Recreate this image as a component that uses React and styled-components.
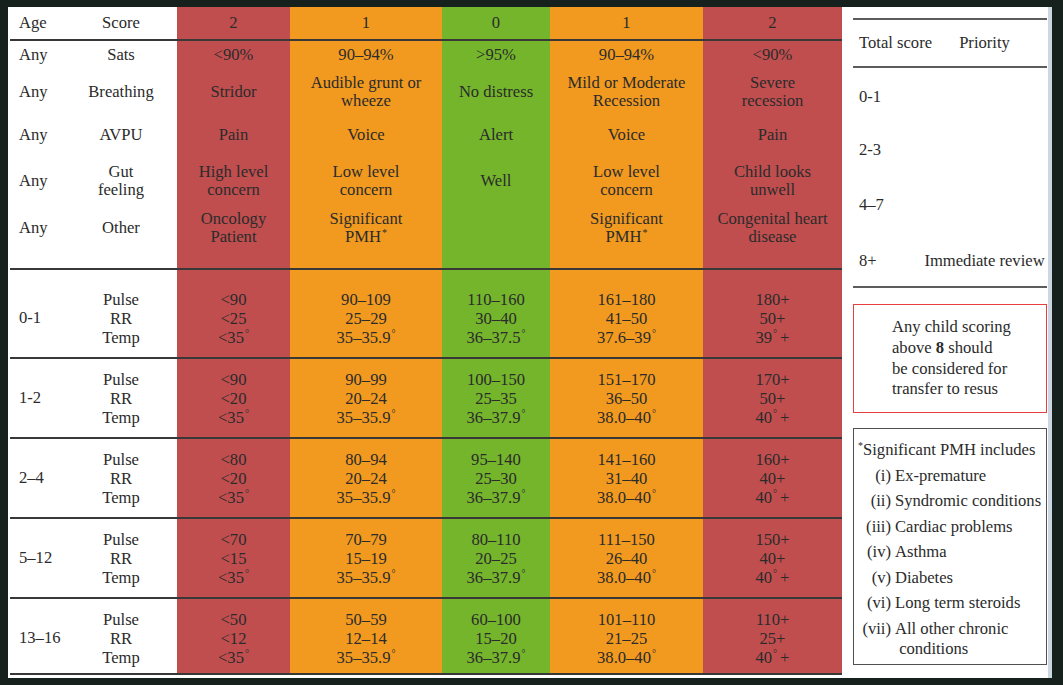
import React from 'react';
import styled, { createGlobalStyle } from 'styled-components';

const GlobalStyle = createGlobalStyle`
  html, body { margin: 0; padding: 0; background: #16201c; }
  body {
    font-family: "Liberation Serif", "Times New Roman", serif;
    color: #2b2b2b;
    font-size: 16.6px;
  }
`;

const COLS = '55px 112px 113px 152px 108px 153px 139px';
const TONES = {
  white: '#ffffff',
  red: '#c04e4f',
  orange: '#f29a1f',
  green: '#74b52b',
};
const ORDER = ['white', 'white', 'red', 'orange', 'green', 'orange', 'red'];

const Frame = styled.div`
  width: 1063px;
  height: 685px;
  box-sizing: border-box;
  padding: 7px 11px 7px 8px;
  background: #16201c;
`;

const Sheet = styled.div`
  height: 100%;
  box-sizing: border-box;
  background: #fff;
  border-right: 4px solid #cbd7e2;
  display: flex;
`;

const Table = styled.div`
  width: 834px;
  padding-left: 2px;
  box-sizing: border-box;
  display: flex;
  flex-direction: column;
`;

const Section = styled.div`
  border-bottom: 2px solid #383838;
`;

const Row = styled.div`
  display: grid;
  grid-template-columns: ${COLS};
  height: ${(p) => p.$h}px;
`;

const Cell = styled.div`
  background: ${(p) => TONES[p.$tone]};
  display: flex;
  align-items: center;
  justify-content: ${(p) => (p.$left ? 'flex-start' : 'center')};
  padding: ${(p) => p.$pt || 0}px 0 ${(p) => p.$pb || 0}px ${(p) => (p.$left ? 9 : 0)}px;
  box-sizing: border-box;
  text-align: center;
  line-height: ${(p) => p.$lh || 18}px;
  white-space: nowrap;
`;

const Stack = styled.div`
  display: flex;
  flex-direction: column;
  align-items: center;
`;

const Sup = styled.span`
  font-size: 10px;
  position: relative;
  top: -6px;
  margin-left: 1px;
  margin-right: ${(p) => (p.$gap ? '3px' : '0')};
  line-height: 0;
`;

const Side = styled.aside`
  width: 206px;
  box-sizing: border-box;
  padding: 11px 1px 0 11px;
  display: flex;
  flex-direction: column;
`;

const ScoreTable = styled.div`
  border-top: 2px solid #5c5c5c;
  border-bottom: 2px solid #5c5c5c;
`;

const ScoreRow = styled.div`
  display: grid;
  grid-template-columns: 69px 1fr;
  align-items: center;
  height: ${(p) => p.$h}px;
  border-bottom: ${(p) => (p.$rule ? '2px solid #5c5c5c' : 'none')};
`;

const ScoreText = styled.span`
  padding-left: ${(p) => (p.$center ? '0' : '6px')};
  text-align: ${(p) => (p.$center ? 'center' : 'left')};
  white-space: nowrap;
`;

const AlertBox = styled.div`
  margin-top: 16px;
  height: 109px;
  box-sizing: border-box;
  border: 1.5px solid #e5403f;
  display: flex;
  align-items: center;
  padding-left: 38px;
  line-height: 20.7px;
  b { font-weight: bold; }
`;

const NoteBox = styled.div`
  margin-top: 15px;
  height: 237px;
  box-sizing: border-box;
  border: 1.5px solid #505050;
  padding-top: 8px;
`;

const NoteTitle = styled.div`
  line-height: 26px;
  padding-left: 3px;
  white-space: nowrap;
`;

const NoteList = styled.div`
  display: grid;
  grid-template-columns: 37px 1fr;
  column-gap: 4px;
  line-height: 20px;
`;

const Numeral = styled.span`
  text-align: right;
  padding: 2.75px 0;
  white-space: nowrap;
`;

const NoteText = styled.span`
  padding: 2.75px 0;
  white-space: nowrap;
`;

const deg = (v, gap) => (
  <>
    {v}
    <Sup $gap={gap}>°</Sup>
  </>
);

const pmh = (
  <>
    Significant
    <br />
    PMH<Sup>*</Sup>
  </>
);

const header = ['Age', 'Score', '2', '1', '0', '1', '2'];

const anyRows = [
  { h: 28, label: 'Sats', vals: ['<90%', '90–94%', '>95%', '90–94%', '<90%'] },
  {
    h: 46,
    label: 'Breathing',
    vals: [
      'Stridor',
      <>Audible grunt or<br />wheeze</>,
      'No distress',
      <>Mild or Moderate<br />Recession</>,
      <>Severe<br />recession</>,
    ],
  },
  { h: 40, label: 'AVPU', vals: ['Pain', 'Voice', 'Alert', 'Voice', 'Pain'] },
  {
    h: 52,
    label: <>Gut<br />feeling</>,
    vals: [
      <>High level<br />concern</>,
      <>Low level<br />concern</>,
      'Well',
      <>Low level<br />concern</>,
      <>Child looks<br />unwell</>,
    ],
  },
  {
    h: 61,
    pb: 19,
    label: 'Other',
    vals: [
      <>Oncology<br />Patient</>,
      pmh,
      '',
      pmh,
      <>Congenital heart<br />disease</>,
    ],
  },
];

const vitals = [
  {
    age: '0-1', h: 87, pt: 9,
    vals: [
      ['<90', '<25', deg('<35')],
      ['90–109', '25–29', deg('35–35.9')],
      ['110–160', '30–40', deg('36–37.5')],
      ['161–180', '41–50', deg('37.6–39')],
      ['180+', '50+', <>{deg('39', true)}+</>],
    ],
  },
  {
    age: '1-2', h: 78,
    vals: [
      ['<90', '<20', deg('<35')],
      ['90–99', '20–24', deg('35–35.9')],
      ['100–150', '25–35', deg('36–37.9')],
      ['151–170', '36–50', deg('38.0–40')],
      ['170+', '50+', <>{deg('40', true)}+</>],
    ],
  },
  {
    age: '2–4', h: 78,
    vals: [
      ['<80', '<20', deg('<35')],
      ['80–94', '20–24', deg('35–35.9')],
      ['95–140', '25–30', deg('36–37.9')],
      ['141–160', '31–40', deg('38.0–40')],
      ['160+', '40+', <>{deg('40', true)}+</>],
    ],
  },
  {
    age: '5–12', h: 78,
    vals: [
      ['<70', '<15', deg('<35')],
      ['70–79', '15–19', deg('35–35.9')],
      ['80–110', '20–25', deg('36–37.9')],
      ['111–150', '26–40', deg('38.0–40')],
      ['150+', '40+', <>{deg('40', true)}+</>],
    ],
  },
  {
    age: '13–16', h: 74, pt: 4,
    vals: [
      ['<50', '<12', deg('<35')],
      ['50–59', '12–14', deg('35–35.9')],
      ['60–100', '15–20', deg('36–37.9')],
      ['101–110', '21–25', deg('38.0–40')],
      ['110+', '25+', <>{deg('40', true)}+</>],
    ],
  },
];

const Lines = ({ items }) => (
  <Stack>
    {items.map((it, i) => (
      <span key={i}>{it}</span>
    ))}
  </Stack>
);

const scoreRows = [
  { h: 58, score: '0-1', pr: '' },
  { h: 48, score: '2-3', pr: '' },
  { h: 62, score: '4–7', pr: '' },
  { h: 50, score: '8+', pr: 'Immediate review' },
];

const notes = [
  ['(i)', 'Ex-premature'],
  ['(ii)', 'Syndromic conditions'],
  ['(iii)', 'Cardiac problems'],
  ['(iv)', 'Asthma'],
  ['(v)', 'Diabetes'],
  ['(vi)', 'Long term steroids'],
  ['(vii)', <>All other chronic<br />&nbsp;conditions</>],
];

export default function App() {
  return (
    <>
      <GlobalStyle />
      <Frame>
        <Sheet>
          <Table>
            <Section>
              <Row $h={32}>
                {header.map((t, i) => (
                  <Cell key={i} $tone={ORDER[i]} $left={i === 0}>
                    <div>{t}</div>
                  </Cell>
                ))}
              </Row>
            </Section>
            <Section>
              {anyRows.map((r, ri) => (
                <Row key={ri} $h={r.h}>
                  <Cell $tone="white" $left $pb={r.pb}>
                    <div>Any</div>
                  </Cell>
                  <Cell $tone="white" $pb={r.pb}>
                    <div>{r.label}</div>
                  </Cell>
                  {r.vals.map((v, i) => (
                    <Cell key={i} $tone={ORDER[i + 2]} $pb={r.pb}>
                      <div>{v}</div>
                    </Cell>
                  ))}
                </Row>
              ))}
            </Section>
            {vitals.map((b, bi) => (
              <Section key={bi}>
                <Row $h={b.h}>
                  <Cell $tone="white" $left $pt={b.pt}>
                    <div>{b.age}</div>
                  </Cell>
                  <Cell $tone="white" $lh={19} $pt={b.pt}>
                    <Lines items={['Pulse', 'RR', 'Temp']} />
                  </Cell>
                  {b.vals.map((v, i) => (
                    <Cell key={i} $tone={ORDER[i + 2]} $lh={19} $pt={b.pt}>
                      <Lines items={v} />
                    </Cell>
                  ))}
                </Row>
              </Section>
            ))}
          </Table>
          <Side>
            <ScoreTable>
              <ScoreRow $h={46} $rule>
                <ScoreText>Total score</ScoreText>
                <ScoreText $center>Priority</ScoreText>
              </ScoreRow>
              {scoreRows.map((r, i) => (
                <ScoreRow key={i} $h={r.h}>
                  <ScoreText>{r.score}</ScoreText>
                  <ScoreText $center>{r.pr}</ScoreText>
                </ScoreRow>
              ))}
            </ScoreTable>
            <AlertBox>
              <div>
                Any child scoring
                <br />
                above <b>8</b> should
                <br />
                be considered for
                <br />
                transfer to resus
              </div>
            </AlertBox>
            <NoteBox>
              <NoteTitle>
                <Sup>*</Sup>Significant PMH includes
              </NoteTitle>
              <NoteList>
                {notes.map(([n, t], i) => (
                  <React.Fragment key={i}>
                    <Numeral>{n}</Numeral>
                    <NoteText>{t}</NoteText>
                  </React.Fragment>
                ))}
              </NoteList>
            </NoteBox>
          </Side>
        </Sheet>
      </Frame>
    </>
  );
}
